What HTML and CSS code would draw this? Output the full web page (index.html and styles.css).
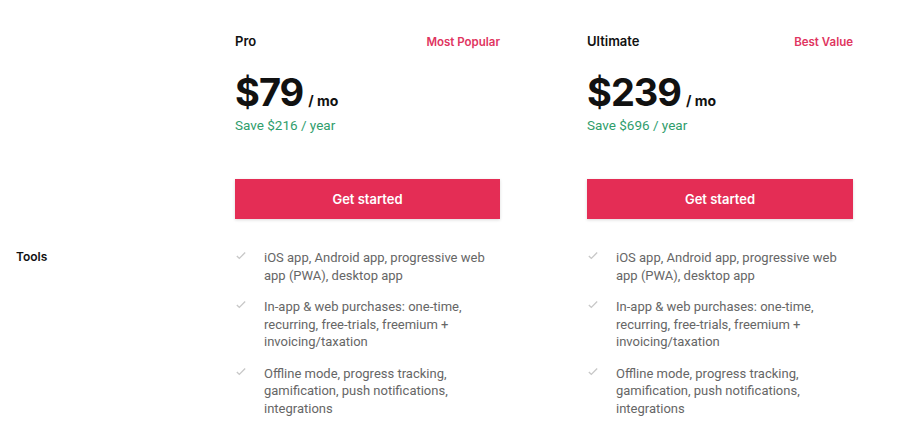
FILE: index.html
```html
<!DOCTYPE html>
<html lang="en">
<head>
    <meta charset="UTF-8">
    <meta name="viewport" content="width=device-width, initial-scale=1.0">
    <title>Pricing</title>
    <link rel="stylesheet" href="styles.css">
</head>
<body>
    <div class="pricing">
        <div class="cell"></div>

        <div class="plan">
            <div class="plan-head">
                <span class="plan-name">Pro</span>
                <span class="plan-tag">Most Popular</span>
            </div>
            <div class="price"><span class="amount">$79</span><span class="per">/ mo</span></div>
            <div class="save">Save $216 / year</div>
            <button type="button" class="cta">Get started</button>
        </div>

        <div class="plan">
            <div class="plan-head">
                <span class="plan-name">Ultimate</span>
                <span class="plan-tag">Best Value</span>
            </div>
            <div class="price"><span class="amount">$239</span><span class="per">/ mo</span></div>
            <div class="save">Save $696 / year</div>
            <button type="button" class="cta">Get started</button>
        </div>

        <div class="row-label">Tools</div>

        <ul class="features">
            <li><svg class="check" viewBox="0 0 12 10"><path d="M1 5.5l3 3L11 1.5"/></svg><span>iOS app, Android app, progressive web app (PWA), desktop app</span></li>
            <li><svg class="check" viewBox="0 0 12 10"><path d="M1 5.5l3 3L11 1.5"/></svg><span>In-app &amp; web purchases: one-time, recurring, free-trials, freemium + invoicing/taxation</span></li>
            <li><svg class="check" viewBox="0 0 12 10"><path d="M1 5.5l3 3L11 1.5"/></svg><span>Offline mode, progress tracking, gamification, push notifications, integrations</span></li>
        </ul>

        <ul class="features">
            <li><svg class="check" viewBox="0 0 12 10"><path d="M1 5.5l3 3L11 1.5"/></svg><span>iOS app, Android app, progressive web app (PWA), desktop app</span></li>
            <li><svg class="check" viewBox="0 0 12 10"><path d="M1 5.5l3 3L11 1.5"/></svg><span>In-app &amp; web purchases: one-time, recurring, free-trials, freemium + invoicing/taxation</span></li>
            <li><svg class="check" viewBox="0 0 12 10"><path d="M1 5.5l3 3L11 1.5"/></svg><span>Offline mode, progress tracking, gamification, push notifications, integrations</span></li>
        </ul>
    </div>
</body>
</html>
```

FILE: styles.css
```css
body {
    background-color: #ffffff;
    color: #111;
    font-family: 'Inter', 'Roboto', Arial, sans-serif;
    margin: 0;
}
.pricing {
    display: grid;
    grid-template-columns: 132px 265px 266px;
    column-gap: 87px;
    padding: 33px 0 0 16px;
}
.plan {
    display: flex;
    flex-direction: column;
}
.plan-head {
    display: flex;
    justify-content: space-between;
    align-items: baseline;
    height: 18px;
}
.plan-name {
    font-size: 13px;
    font-weight: 600;
    color: #111;
}
.plan-tag {
    font-size: 11.5px;
    font-weight: 600;
    color: #e0355f;
}
.price {
    display: flex;
    align-items: baseline;
    margin-top: 19px;
    line-height: 44px;
}
.amount {
    font-size: 38px;
    font-weight: 700;
    letter-spacing: -1px;
}
.per {
    font-size: 14px;
    font-weight: 700;
    margin-left: 5px;
}
.save {
    font-family: 'Roboto', Arial, sans-serif;
    font-size: 13.5px;
    color: #2f9d6c;
    margin-top: -7px;
    line-height: 18px;
}
.cta {
    margin-top: 45px;
    height: 40px;
    border: none;
    background: #e42d55;
    color: #fff;
    font-family: 'Inter', Arial, sans-serif;
    font-size: 13px;
    font-weight: 600;
    cursor: pointer;
    box-shadow: 0 1px 3px rgba(0,0,0,0.15);
}
.row-label {
    margin-top: 30px;
    font-size: 12px;
    font-weight: 600;
    color: #111;
}
.features {
    list-style: none;
    margin: 30px 0 0 0;
    padding: 0;
}
.features li {
    display: flex;
    align-items: flex-start;
    margin-bottom: 14px;
    font-family: 'Roboto', Arial, sans-serif;
    font-size: 13px;
    line-height: 17.5px;
    color: #666;
}
.check {
    width: 10px;
    height: 9px;
    flex: none;
    margin: 2px 18px 0 1px;
    fill: none;
    stroke: #c8c8c8;
    stroke-width: 1.6;
}
```
